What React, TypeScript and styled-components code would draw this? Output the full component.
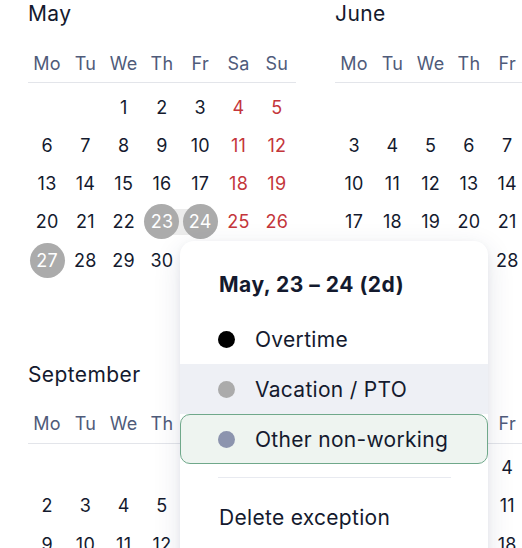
import React from "react";
import styled, { createGlobalStyle, css } from "styled-components";

const Global = createGlobalStyle`
  html, body { margin: 0; padding: 0; background: #ffffff; overflow: hidden; }
  body { font-family: Inter, "Noto Sans", "Liberation Sans", sans-serif; color: #141a2e; }
  #root { width: 522px; height: 548px; overflow: hidden; position: relative; }
`;

const Page = styled.div`
  position: relative;
  width: 522px;
  height: 548px;
  overflow: hidden;
`;

const YearGrid = styled.div`
  display: grid;
  grid-template-columns: repeat(4, 268px);
  column-gap: 39px;
  row-gap: 44px;
  padding: 1px 0 0 28px;
  width: max-content;
`;

const Month = styled.section`
  display: flex;
  flex-direction: column;
`;

const MonthTitle = styled.h2`
  margin: 0 0 17px 0;
  font-size: 21px;
  line-height: 26px;
  font-weight: 400;
  letter-spacing: 0.4px;
  color: #141a2e;
`;

const WeekHeader = styled.div`
  display: grid;
  grid-template-columns: repeat(7, 1fr);
  height: 38px;
  border-bottom: 1px solid #e3e5ea;
  margin-bottom: 5px;
`;

const WeekDay = styled.div`
  display: flex;
  align-items: center;
  justify-content: center;
  font-size: 18px;
  letter-spacing: 0.3px;
  color: #4f5b7a;
`;

const Days = styled.div`
  display: grid;
  grid-template-columns: repeat(7, 1fr);
  grid-auto-rows: 38.25px;
`;

const Cell = styled.div<{ $band?: "start" | "end" }>`
  position: relative;
  display: flex;
  align-items: center;
  justify-content: center;
  ${(p) =>
    p.$band &&
    css`
      &::before {
        content: "";
        position: absolute;
        top: 6px;
        bottom: 6px;
        left: ${p.$band === "start" ? "50%" : "0"};
        right: ${p.$band === "end" ? "50%" : "0"};
        background: #ececec;
      }
    `}
`;

const DayNum = styled.span<{ $weekend?: boolean; $marked?: boolean }>`
  position: relative;
  z-index: 1;
  width: 35px;
  height: 35px;
  border-radius: 50%;
  display: flex;
  align-items: center;
  justify-content: center;
  font-size: 18px;
  letter-spacing: 0.3px;
  color: ${(p) => (p.$marked ? "#ffffff" : p.$weekend ? "#c4363b" : "#141a2e")};
  background: ${(p) => (p.$marked ? "#ababab" : "transparent")};
`;

const Popup = styled.div`
  position: absolute;
  left: 180px;
  top: 241px;
  width: 308px;
  height: 340px;
  background: #ffffff;
  border-radius: 14px;
  box-shadow: 0 2px 6px rgba(40, 50, 90, 0.06), 0 8px 28px rgba(40, 50, 90, 0.12);
  display: flex;
  flex-direction: column;
  z-index: 5;
`;

const PopupTitle = styled.div`
  padding: 31px 30px 0 39px;
  margin-bottom: 16px;
  font-size: 21px;
  line-height: 26px;
  font-weight: 700;
  letter-spacing: 0.5px;
  white-space: nowrap;
  color: #141a2e;
`;

const MenuItem = styled.div<{ $state?: "hover" | "focus" }>`
  height: 50px;
  box-sizing: border-box;
  display: flex;
  align-items: center;
  gap: 20px;
  padding-left: 37px;
  font-size: 21px;
  letter-spacing: 0.3px;
  color: #141a2e;
  border: 1px solid transparent;
  ${(p) =>
    p.$state === "hover" &&
    css`
      background: #eef0f5;
    `}
  ${(p) =>
    p.$state === "focus" &&
    css`
      background: #eef4f0;
      border-color: #6fa88a;
      border-radius: 10px;
    `}
`;

const Dot = styled.span<{ $color: string }>`
  width: 17px;
  height: 17px;
  border-radius: 50%;
  background: ${(p) => p.$color};
  flex: none;
`;

const Separator = styled.hr`
  margin: 13px 37px 14px 38px;
  border: none;
  border-top: 1px solid #e8eaf0;
`;

const DeleteItem = styled.div`
  height: 50px;
  display: flex;
  align-items: center;
  padding-left: 39px;
  font-size: 21px;
  letter-spacing: 0.3px;
  color: #141a2e;
`;

const WEEKDAYS = ["Mo", "Tu", "We", "Th", "Fr", "Sa", "Su"];

type MonthDef = { name: string; offset: number; days: number; marked?: number[]; band?: [number, number] };

const MONTHS: MonthDef[] = [
  { name: "May", offset: 2, days: 31, marked: [23, 24, 27], band: [23, 24] },
  { name: "June", offset: 5, days: 30 },
  { name: "July", offset: 0, days: 31 },
  { name: "August", offset: 3, days: 31 },
  { name: "September", offset: 6, days: 30 },
  { name: "October", offset: 1, days: 31 },
  { name: "November", offset: 4, days: 30 },
  { name: "December", offset: 6, days: 31 },
];

function MonthView({ m }: { m: MonthDef }) {
  const cells: React.ReactNode[] = [];
  for (let i = 0; i < 42; i++) {
    const d = i - m.offset + 1;
    const col = i % 7;
    if (d < 1 || d > m.days) {
      cells.push(<Cell key={i} />);
      continue;
    }
    let band: "start" | "end" | undefined;
    if (m.band) {
      if (d === m.band[0]) band = "start";
      else if (d === m.band[1]) band = "end";
    }
    cells.push(
      <Cell key={i} $band={band}>
        <DayNum $weekend={col >= 5} $marked={m.marked?.includes(d)}>
          {d}
        </DayNum>
      </Cell>
    );
  }
  return (
    <Month>
      <MonthTitle>{m.name}</MonthTitle>
      <WeekHeader>
        {WEEKDAYS.map((w) => (
          <WeekDay key={w}>{w}</WeekDay>
        ))}
      </WeekHeader>
      <Days>{cells}</Days>
    </Month>
  );
}

export default function App() {
  return (
    <Page>
      <Global />
      <YearGrid>
        {MONTHS.map((m) => (
          <MonthView key={m.name} m={m} />
        ))}
      </YearGrid>
      <Popup>
        <PopupTitle>May, 23 – 24 (2d)</PopupTitle>
        <MenuItem>
          <Dot $color="#000000" />
          Overtime
        </MenuItem>
        <MenuItem $state="hover">
          <Dot $color="#ababab" />
          Vacation / PTO
        </MenuItem>
        <MenuItem $state="focus">
          <Dot $color="#8c94ae" />
          Other non-working
        </MenuItem>
        <Separator />
        <DeleteItem>Delete exception</DeleteItem>
      </Popup>
    </Page>
  );
}
